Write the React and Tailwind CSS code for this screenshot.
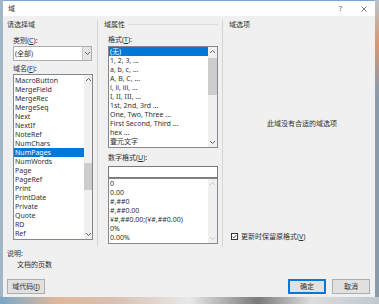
import React from "react";

const fieldNames = [
  "MacroButton", "MergeField", "MergeRec", "MergeSeq", "Next", "NextIf", "NoteRef", "NumChars",
  "NumPages", "NumWords", "Page", "PageRef", "Print", "PrintDate", "Private", "Quote", "RD", "Ref",
];

const formats = [
  "(无)", "1, 2, 3, ...", "a, b, c, ...", "A, B, C, ...", "i, ii, iii, ...", "I, II, III, ...",
  "1st, 2nd, 3rd ...", "One, Two, Three ...", "First Second, Third ...", "hex ...", "壹元文字",
];

const numFormats = ["0", "0.00", "#,##0", "#,##0.00", "¥#,##0.00;(¥#,##0.00)", "0%", "0.00%"];

const Chevron = ({ up, faint }) => (
  <svg width="7" height="5" viewBox="0 0 7 5">
    <path
      d={up ? "M1 4 L3.5 1.5 L6 4" : "M1 1 L3.5 3.5 L6 1"}
      fill="none"
      stroke={faint ? "#c8c8c8" : "#606060"}
      strokeWidth="1"
    />
  </svg>
);

// thumbGap: space between the up arrow and the thumb
const ScrollBar = ({ w, thumbGap, thumbH, faint }) => (
  <div className={`${w} flex flex-col bg-[#f0f0f0]`}>
    <div className="h-[9px] flex items-center justify-center">
      <Chevron up faint={faint} />
    </div>
    {thumbH ? (
      <>
        <div style={{ height: thumbGap }} />
        <div className="bg-[#cdcdcd]" style={{ height: thumbH }} />
      </>
    ) : null}
    <div className="flex-1" />
    <div className="h-[9px] flex items-center justify-center">
      <Chevron faint={faint} />
    </div>
  </div>
);

const U = ({ children }) => (
  <span className="underline decoration-[0.5px] underline-offset-1">{children}</span>
);

const Btn = ({ children, primary }) => (
  <div
    className={`w-[38px] h-[15px] flex items-center justify-center bg-[#e1e1e1] border ${
      primary ? "border-[#0078d7] outline outline-[#0078d7] -outline-offset-2" : "border-[#adadad]"
    }`}
  >
    {children}
  </div>
);

export default function App() {
  return (
    <div className="w-[379px] h-[304px] flex flex-col overflow-hidden bg-[#8fa3b5] text-[7px] leading-[9px] text-[#303030] font-['Noto_Sans','Noto_Sans_CJK_SC',sans-serif]">
      <div className="flex h-[297px]">
        <div className="w-[3px] bg-[#a3b6c6]" />

        {/* dialog */}
        <div className="w-[372px] flex flex-col bg-[#f0f0f0] border-t border-[#7aa6d6]">
          {/* title bar */}
          <div className="h-[15px] bg-white flex items-center pl-[5px] pr-[8px]">
            <span>域</span>
            <span className="ml-auto text-[7px] text-[#555]">?</span>
            <svg className="ml-[19px]" width="6" height="6" viewBox="0 0 6 6">
              <path d="M0.5 0.5 L5.5 5.5 M5.5 0.5 L0.5 5.5" stroke="#555" strokeWidth="0.8" />
            </svg>
          </div>

          {/* main columns */}
          <div className="flex h-[231px] pt-[4px]">
            {/* left */}
            <div className="w-[95px] pl-[4px] border-r border-[#d5d5d5]">
              <div>请选择域</div>
              <div className="pl-[6px]">
                <div className="mt-[7px]">类别(<U>C</U>):</div>
                <div className="mt-[1px] w-[79px] h-[15px] flex bg-white border border-[#adadad]">
                  <div className="flex-1 pl-[1px] flex items-center">(全部)</div>
                  <div className="w-[9px] flex items-center justify-center bg-[#e5e5e5] border-l border-[#c8c8c8]">
                    <Chevron />
                  </div>
                </div>
                <div className="mt-[3px]">域名(<U>F</U>):</div>
                <div className="mt-[1px] w-[80px] h-[166px] flex bg-white border border-[#828790]">
                  <div className="flex-1 pt-[1px]">
                    {fieldNames.map((n) => (
                      <div
                        key={n}
                        className={`h-[9px] pl-[1px] whitespace-nowrap ${
                          n === "NumPages" ? "bg-[#0078d7] text-white" : ""
                        }`}
                      >
                        {n}
                      </div>
                    ))}
                  </div>
                  <ScrollBar w="w-[8px]" thumbGap={79} thumbH={27} />
                </div>
              </div>
            </div>

            {/* middle */}
            <div className="w-[125px] pl-[6px] border-r border-[#d5d5d5]">
              <div className="flex items-center">
                <span>域属性</span>
                <div className="flex-1 h-px bg-[#dcdcdc] ml-[3px] mr-[4px]" />
              </div>
              <div className="pl-[4px]">
                <div className="mt-[6px]">格式(<U>T</U>):</div>
                <div className="mt-[2px] w-[110px] h-[102px] flex bg-white border border-[#828790]">
                  <div className="flex-1">
                    {formats.map((f) => (
                      <div
                        key={f}
                        className={`h-[9px] pl-[1px] whitespace-nowrap ${
                          f === "(无)" ? "bg-[#0078d7] text-white" : ""
                        }`}
                      >
                        {f}
                      </div>
                    ))}
                  </div>
                  <ScrollBar w="w-[9px]" thumbGap={2} thumbH={37} />
                </div>
                <div className="mt-[5px]">数字格式(<U>U</U>):</div>
                <div className="mt-[4px] w-[110px] h-[12px] bg-white border border-[#7a7a7a]" />
                <div className="w-[110px] h-[66px] flex bg-white border border-[#828790]">
                  <div className="flex-1">
                    {numFormats.map((f) => (
                      <div key={f} className="h-[9px] pl-[1px] whitespace-nowrap">
                        {f}
                      </div>
                    ))}
                  </div>
                  <ScrollBar w="w-[9px]" faint />
                </div>
              </div>
            </div>

            {/* right */}
            <div className="flex-1 pl-[6px]">
              <div>域选项</div>
              <div className="mt-[90px] text-center">此域没有合适的域选项</div>
              <div className="mt-[104px] pl-[2px] flex items-center">
                <div className="w-[7px] h-[7px] bg-white border border-[#333] flex items-center justify-center">
                  <svg width="5" height="5" viewBox="0 0 5 5">
                    <path d="M0.6 2.6 L1.9 3.9 L4.4 1" fill="none" stroke="#222" strokeWidth="0.8" />
                  </svg>
                </div>
                <span className="ml-[3px]">
                  更新时保留原格式(<U>V</U>)
                </span>
              </div>
            </div>
          </div>

          {/* description */}
          <div className="mt-[2px] pl-[4px]">说明:</div>
          <div className="mt-[2px] pl-[14px]">文档的页数</div>

          {/* buttons */}
          <div className="mt-auto pb-[3px] pl-[4px] pr-[5px] flex items-center">
            <Btn>
              域代码(<U>I</U>)
            </Btn>
            <div className="ml-auto flex gap-[6px]">
              <Btn primary>确定</Btn>
              <Btn>取消</Btn>
            </div>
          </div>
        </div>

        <div className="flex-1 bg-[linear-gradient(180deg,#b9c3cc_0%,#d9966e_15%,#8c9bab_30%,#8c9bab_100%)]" />
      </div>
      <div className="h-[7px] bg-[linear-gradient(90deg,#78a8c8_0%,#e0b89c_15%,#d8c0b0_30%,#e8e8e8_50%,#7a7a7a_68%,#dcdcdc_82%,#c0c8d0_100%)]" />
    </div>
  );
}
